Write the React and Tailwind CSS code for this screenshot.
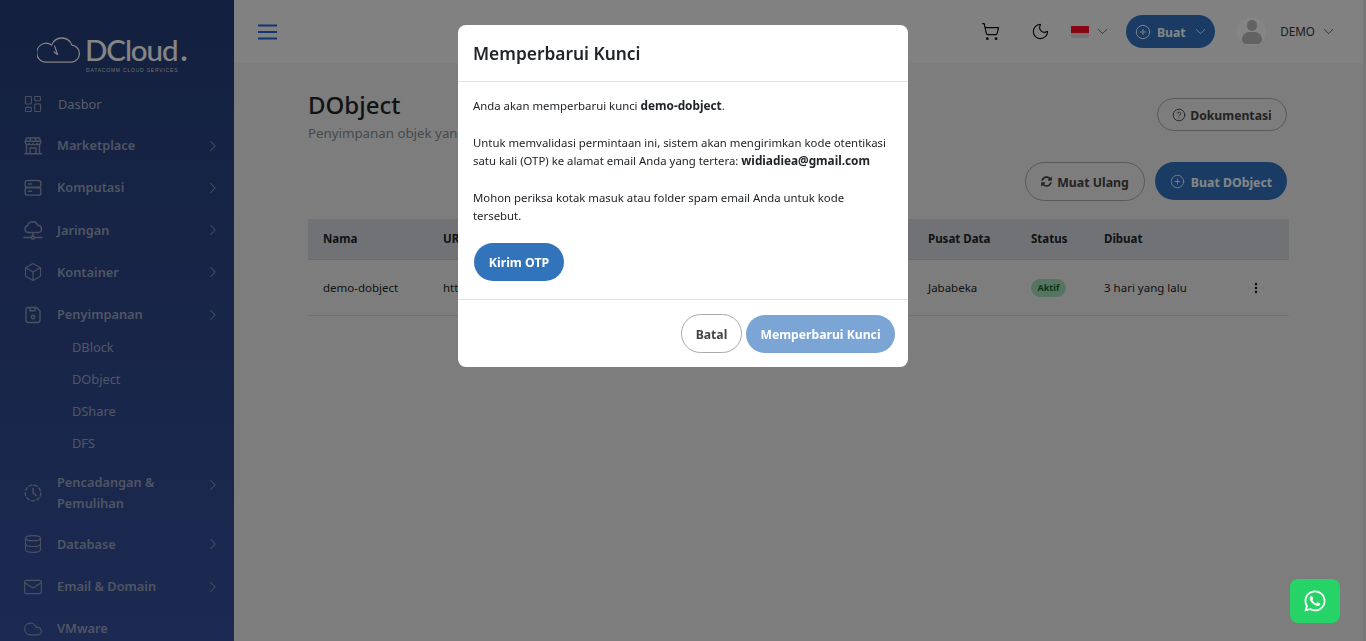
import React from "react";
import { LayoutDashboard, Box, Database, Mail, Cloud, ChevronRight, ChevronDown, ShoppingCart, Moon, CirclePlus, CircleHelp } from "lucide-react";
import { FaSyncAlt, FaWhatsapp } from "react-icons/fa";

const ic = "w-[20px] h-[20px]";
const sp = { fill: "none", stroke: "currentColor", strokeWidth: 1.4, strokeLinecap: "round", strokeLinejoin: "round" };

const StoreIcon = () => (
  <svg viewBox="0 0 20 20" className={ic} {...sp}>
    <path d="M3.500 2h13l1.200 3.500v1.300a2 2 0 0 1-3.800.6 2.100 2.100 0 0 1-3.900 0 2.100 2.100 0 0 1-3.900 0 2 2 0 0 1-3.800-.6V5.500L3.500 2z" />
    <path d="M2.300 5.300h15.400M7.500 2 7 5.300M12.500 2l.5 3.300" />
    <path d="M3.500 9v8.500M16.500 9v8.500M1.500 17.800h17" />
    <path d="M7 17.500v-5.500h6v5.500" />
  </svg>
);
const ServerIcon = () => (
  <svg viewBox="0 0 20 20" className={ic} {...sp}>
    <rect x="2.200" y="2.500" width="15.600" height="7" rx="2.200" />
    <rect x="2.200" y="9.500" width="15.600" height="7.600" rx="2.200" />
    <path d="M5.500 6h3M5.500 13.300h3" />
  </svg>
);
const CloudNet = () => (
  <svg viewBox="0 0 20 20" className={ic} {...sp}>
    <path d="M5 12.500a3.400 3.400 0 0 1-.4-6.700 5.200 5.200 0 0 1 10-.6 3.700 3.700 0 0 1 1 7.300H5z" />
    <path d="M10 12.500v3.500M1 17.500h7M12 17.500h7" />
    <circle cx="10" cy="17.500" r="1.500" />
  </svg>
);
const SaveIcon = () => (
  <svg viewBox="0 0 20 20" className={ic} {...sp}>
    <path d="M5 2.500h8.500L17 6v9a2.500 2.500 0 0 1-2.500 2.500h-9A2.500 2.500 0 0 1 3 15V4.500a2 2 0 0 1 2-2z" />
    <path d="M7 2.500v3.200h5V2.500" />
    <circle cx="10" cy="12" r="1.700" />
  </svg>
);
const HistoryIcon = () => (
  <svg viewBox="0 0 20 20" className={ic} {...sp}>
    <circle cx="10" cy="10" r="7.800" strokeDasharray="3 2.400" />
    <path d="M10 5.500V10l3 2.600" />
  </svg>
);

const items = [
  ["Marketplace", <StoreIcon />],
  ["Komputasi", <ServerIcon />],
  ["Jaringan", <CloudNet />],
  ["Kontainer", <Box className={ic} strokeWidth={1.4} />],
  ["Penyimpanan", <SaveIcon />],
];
const tail = [
  ["Database", <Database className={ic} strokeWidth={1.4} />],
  ["Email & Domain", <Mail className={ic} strokeWidth={1.4} />],
  ["VMware", <Cloud className={ic} strokeWidth={1.4} />],
];

function NavRow({ label, icon, noArrow }) {
  return (
    <div className="flex items-center shrink-0 h-[42.2px] pl-[23px] pr-[12px] text-[#8f9ab5]">
      <span className="w-[34px] shrink-0 flex">{icon}</span>
      <span className="flex-1 text-[12.8px] font-semibold text-[#98a3bd]">{label}</span>
      {!noArrow && <ChevronRight className="w-[18px] h-[18px] text-[#8f9ab5]" strokeWidth={1.4} />}
    </div>
  );
}

function Sidebar() {
  return (
    <aside className="w-[234px] shrink-0 h-full overflow-hidden flex flex-col bg-gradient-to-b from-[#263e79] to-[#36519e]">
      <div className="h-[82.5px] shrink-0 flex flex-col items-start pt-[37px] pl-[37px]">
        <div className="flex items-end text-white h-[26px]">
          <svg viewBox="0 0 46 26" className="w-[45px] h-[26px]" fill="none" stroke="currentColor" strokeWidth="1.300" strokeLinecap="round" strokeLinejoin="round">
            <path d="M10 25.300H35.500A8.700 8.700 0 0 0 35.700 8 11 11 0 0 0 15 8 9.600 9.600 0 1 0 10 25.300z" />
            <path d="M18 9l3 8.500-3.500-2.500" />
          </svg>
          <span className="font-['Lato',sans-serif] text-[29.500px] leading-[26px] ml-[3px] tracking-[-1.100px] font-medium">DCloud<span className="font-bold ml-[3px]">.</span></span>
        </div>
        <div className="font-['Liberation_Sans',sans-serif] text-[5px] leading-[6px] tracking-[0.800px] text-[#d0d0d0] ml-[49px] mt-[4px] whitespace-nowrap">DATACOMM CLOUD SERVICES</div>
      </div>
      <div className="flex items-center shrink-0 h-[42.2px] pl-[23px] text-[#8f9ab5]">
        <span className="w-[35px] shrink-0 flex"><LayoutDashboard className={ic} strokeWidth={1.300} /></span>
        <span className="text-[12.8px] text-[#a8b1c6] pt-[2px]">Dasbor</span>
      </div>
      {items.map(([l, i]) => <NavRow key={l} label={l} icon={i} />)}
      <div className="pl-[72px] text-[12.8px] text-[#9ba5bd] mt-[-3.700px] shrink-0">
        {["DBlock", "DObject", "DShare", "DFS"].map((t) => (
          <div key={t} className="h-[32px] flex items-center">{t}</div>
        ))}
      </div>
      <div className="flex items-center shrink-0 pl-[23px] pr-[12px] pt-[12.500px] pb-[8.900px] text-[#8f9ab5]">
        <span className="w-[34px] shrink-0 flex"><HistoryIcon /></span>
        <span className="flex-1 text-[12.8px] leading-[21px] font-semibold text-[#98a3bd]">Pencadangan &<br />Pemulihan</span>
        <ChevronRight className="w-[18px] h-[18px] mb-[16px] text-[#8f9ab5]" strokeWidth={1.4} />
      </div>
      {tail.map(([l, i]) => <NavRow key={l} label={l} icon={i} noArrow={l === "VMware"} />)}
    </aside>
  );
}

function Topbar() {
  return (
    <header className="h-[63px] shrink-0 bg-[#f8f8f8] flex items-center pl-[24px] pr-[26px]">
      <svg viewBox="0 0 19 16" className="w-[19px] h-[16px]" fill="none" stroke="#2567d8" strokeWidth="1.800">
        <path d="M0 1.500h19M0 8h19M0 14.500h19" />
      </svg>
      <div className="ml-auto flex items-center">
        <ShoppingCart className="w-[19px] h-[19px] text-[#111]" strokeWidth={1.500} />
        <Moon className="w-[19px] h-[19px] text-[#111] ml-[31px]" strokeWidth={1.400} />
        <span className="ml-[21px] w-[18px] h-[12px] flex flex-col">
          <span className="h-[7px] bg-[#ff0f24]" />
          <span className="h-[5px] bg-[#e4dce0]" />
        </span>
        <ChevronDown className="w-[17px] h-[17px] text-[#444] ml-[5px]" strokeWidth={1.100} />
        <button className="ml-[15px] h-[33px] w-[89px] pl-[2px] rounded-full bg-[#3274c0] text-white flex items-center justify-center text-[12.200px] font-bold">
          <CirclePlus className="w-[16px] h-[16px] mr-[6px]" strokeWidth={1.400} />
          <span className="translate-y-[2px]">Buat</span>
          <ChevronDown className="w-[17px] h-[17px] ml-[6px]" strokeWidth={1.200} />
        </button>
        <div className="ml-[22px] w-[29px] h-[29px] rounded-full bg-white overflow-hidden flex flex-col items-center">
          <span className="w-[10px] h-[11px] rounded-full bg-[#bcbcbc] mt-[3px]" />
          <span className="w-[20px] h-[12px] rounded-t-[8px] rounded-b-[5px] bg-[#bcbcbc] mt-[1px]" />
        </div>
        <span className="ml-[14px] text-[11.700px] text-[#333]">DEMO</span>
        <ChevronDown className="w-[17px] h-[17px] text-[#444] ml-[5px]" strokeWidth={1.100} />
      </div>
    </header>
  );
}

function Table() {
  const row = "grid grid-cols-[120px_485px_103px_73px_1fr] items-center px-[15px]";
  return (
    <div className="mt-[18px] mr-[-2px] text-[11.500px]">
      <div className={row + " h-[41px] bg-[#d6dbe0] border-b border-[#cbd0d5] font-bold text-[#212529]"}>
        <span>Nama</span><span>URL</span><span>Pusat Data</span><span>Status</span><span>Dibuat</span>
      </div>
      <div className={row + " h-[56px] border-b border-[#d6dadf] text-[#212529]"}>
        <span>demo-dobject</span>
        <span>https://</span>
        <span>Jababeka</span>
        <span>
          <span className="inline-flex items-center justify-center w-[35px] h-[18px] rounded-full bg-[#a3dfbc] text-[#14652f] text-[9px] font-bold">Aktif</span>
        </span>
        <span className="flex items-center justify-between pr-[16px]">
          3 hari yang lalu
          <svg viewBox="0 0 4 12" className="w-[4px] h-[12px]" fill="#111">
            <circle cx="2" cy="2" r="1.200" /><circle cx="2" cy="6" r="1.200" /><circle cx="2" cy="10" r="1.200" />
          </svg>
        </span>
      </div>
    </div>
  );
}

function Content() {
  return (
    <main className="flex-1 bg-[#f0f0f0] pl-[74px] pr-[76px] pt-[26px]">
      <div className="flex items-start justify-between">
        <div>
          <h1 className="text-[24px] leading-[32px] font-medium text-[#212529]">DObject</h1>
          <p className="mt-[2px] text-[13.300px] leading-[21px] text-[#868e96]">Penyimpanan objek yang</p>
        </div>
        <button className="mt-[9px] h-[33px] w-[130px] rounded-full border border-[#aaa] flex items-center justify-center text-[12.200px] font-bold text-[#444]">
          <CircleHelp className="w-[14px] h-[14px] mr-[4px]" strokeWidth={1.500} />
          <span className="translate-y-[2px]">Dokumentasi</span>
        </button>
      </div>
      <div className="flex justify-end mt-[18px] gap-[10px] items-start">
        <button className="h-[39px] w-[120px] rounded-full border border-[#aaa] flex items-center justify-center text-[12.300px] font-bold text-[#444]">
          <FaSyncAlt className="w-[11px] h-[11px] mr-[5px]" />
          <span className="translate-y-[2px]">Muat Ulang</span>
        </button>
        <button className="h-[38px] w-[132px] rounded-full bg-[#3274c0] text-white flex items-center justify-center text-[12.300px] font-bold">
          <CirclePlus className="w-[15px] h-[15px] mr-[6px]" strokeWidth={1.300} />
          <span className="translate-y-[2px]">Buat DObject</span>
        </button>
      </div>
      <Table />
    </main>
  );
}

function Modal() {
  return (
    <div className="fixed inset-0 bg-black/48 flex justify-center items-start pt-[25px]">
      <div className="w-[450px] bg-white rounded-[8px] overflow-hidden text-[#212529]">
        <div className="h-[57px] border-b border-[#dee2e6] flex items-center px-[15px]">
          <h2 className="text-[17.350px] font-semibold">Memperbarui Kunci</h2>
        </div>
        <div className="h-[218px] px-[15px] pt-[15px] text-[11.360px] leading-[18px] border-b border-[#dee2e6]">
          <p>Anda akan memperbarui kunci <b className="text-[11.800px] leading-none">demo-dobject</b>.</p>
          <p className="mt-[19px]">Untuk memvalidasi permintaan ini, sistem akan mengirimkan kode otentikasi<br />satu kali (OTP) ke alamat email Anda yang tertera: <b className="text-[11.800px] leading-none">widiadiea@gmail.com</b></p>
          <p className="mt-[19px]">Mohon periksa kotak masuk atau folder spam email Anda untuk kode<br />tersebut.</p>
          <button className="block mt-[18px] ml-[1px] h-[38px] w-[90px] pt-[2px] rounded-full bg-[#3274bb] text-white text-[12.300px] font-bold">Kirim OTP</button>
        </div>
        <div className="h-[67px] flex items-center justify-end pr-[13px] gap-[4px]">
          <button className="h-[39px] w-[61px] pt-[4px] rounded-full border border-[#aaa] text-[#444] text-[12.200px] font-bold">Batal</button>
          <button className="h-[38px] w-[149px] pt-[4px] rounded-full bg-[#7ba5d4] text-white text-[12.200px] font-bold">Memperbarui Kunci</button>
        </div>
      </div>
    </div>
  );
}

export default function App() {
  return (
    <div className="h-screen w-full flex overflow-hidden font-['Noto_Sans',sans-serif]">
      <Sidebar />
      <div className="flex-1 flex flex-col min-w-0">
        <Topbar />
        <Content />
      </div>
      <div className="w-[3px] shrink-0 bg-[#e6e6e6]" />
      <Modal />
      <a className="fixed right-[26px] bottom-[18px] w-[50px] h-[44px] rounded-[8px] bg-[#25d366] flex items-center justify-center text-white">
        <FaWhatsapp className="w-[24px] h-[24px]" />
      </a>
    </div>
  );
}
